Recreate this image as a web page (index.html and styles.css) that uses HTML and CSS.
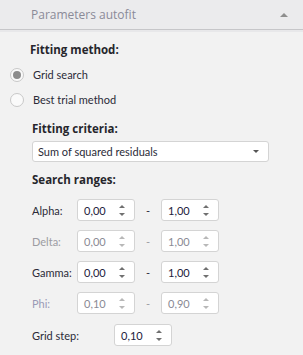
FILE: index.html
```html
<!DOCTYPE html>
<html lang="en">

<head>
    <meta charset="UTF-8">
    <link rel="stylesheet" href="styles.css">
    <title>Parameters autofit</title>
</head>

<body>
    <div class="panel">
        <div class="panel-head">
            <span class="panel-title">Parameters autofit</span>
            <span class="caret-up"></span>
        </div>

        <div class="panel-body">
            <div class="heading">Fitting method:</div>

            <label class="radio-row">
                <span class="radio checked"></span>
                <span>Grid search</span>
            </label>
            <label class="radio-row">
                <span class="radio"></span>
                <span>Best trial method</span>
            </label>

            <div class="sub">
                <div class="heading">Fitting criteria:</div>
                <div class="select">
                    <span>Sum of squared residuals</span>
                    <span class="caret-down"></span>
                </div>

                <div class="heading ranges">Search ranges:</div>

                <div class="range first">
                    <span class="range-label">Alpha:</span>
                    <div class="spin"><span>0,00</span><span class="arrows"><i class="up"></i><i class="down"></i></span></div>
                    <span class="dash">-</span>
                    <div class="spin"><span>1,00</span><span class="arrows"><i class="up"></i><i class="down"></i></span></div>
                </div>
                <div class="range disabled">
                    <span class="range-label">Delta:</span>
                    <div class="spin"><span>0,00</span><span class="arrows"><i class="up"></i><i class="down"></i></span></div>
                    <span class="dash">-</span>
                    <div class="spin"><span>1,00</span><span class="arrows"><i class="up"></i><i class="down"></i></span></div>
                </div>
                <div class="range">
                    <span class="range-label">Gamma:</span>
                    <div class="spin"><span>0,00</span><span class="arrows"><i class="up"></i><i class="down"></i></span></div>
                    <span class="dash">-</span>
                    <div class="spin"><span>1,00</span><span class="arrows"><i class="up"></i><i class="down"></i></span></div>
                </div>
                <div class="range disabled phi">
                    <span class="range-label">Phi:</span>
                    <div class="spin"><span>0,10</span><span class="arrows"><i class="up"></i><i class="down"></i></span></div>
                    <span class="dash">-</span>
                    <div class="spin"><span>0,90</span><span class="arrows"><i class="up"></i><i class="down"></i></span></div>
                </div>

                <div class="range step">
                    <span class="range-label">Grid step:</span>
                    <div class="spin"><span>0,10</span><span class="arrows"><i class="up"></i><i class="down"></i></span></div>
                </div>
            </div>
        </div>
    </div>
</body>

</html>
```

FILE: styles.css
```css
* {
    margin: 0;
    padding: 0;
    box-sizing: border-box;
}

body {
    background: #f2f2f2;
    font-family: Lato, "Open Sans", sans-serif;
    font-size: 11px;
    color: #2b2b38;
}

.panel {
    width: 303px;
    height: 355px;
    background: #f2f2f2;
}

.panel-head {
    height: 30px;
    display: flex;
    align-items: center;
    justify-content: space-between;
    padding: 0 15px 0 31px;
    background: #ebebed;
    border-bottom: 1px solid #c6c6c9;
    box-shadow: 0 2px 0 #e8e8ea;
}

.panel-title {
    font-family: "Open Sans", sans-serif;
    color: #8a8a98;
    font-size: 12px;
}

.caret-up {
    width: 0;
    height: 0;
    border-left: 4px solid transparent;
    border-right: 4px solid transparent;
    border-bottom: 4px solid #8e8e8e;
}

.panel-body {
    padding: 11px 0 0 10px;
}

.heading {
    font-family: "Open Sans", sans-serif;
    font-weight: bold;
    font-size: 11.5px;
    color: #26262c;
    padding-left: 20px;
    height: 18px;
    line-height: 18px;
}

.radio-row {
    display: flex;
    align-items: center;
    gap: 9px;
    height: 25px;
}

.radio-row:first-of-type {
    margin-top: 3px;
}

.radio {
    width: 14px;
    height: 14px;
    border-radius: 50%;
    border: 1px solid #c8c8c8;
    background: #fafafa;
    display: flex;
    align-items: center;
    justify-content: center;
}

.radio.checked::after {
    content: "";
    width: 8px;
    height: 8px;
    border-radius: 50%;
    background: #8c8c8c;
}

.sub {
    padding-left: 2px;
    margin-top: 8px;
}

.select {
    margin: 3px 0 0 20px;
    width: 237px;
    height: 21px;
    border: 1px solid #d4d4d4;
    border-radius: 3px;
    background: #fff;
    display: flex;
    align-items: center;
    justify-content: space-between;
    padding: 0 9px 0 5px;
}

.caret-down {
    width: 0;
    height: 0;
    border-left: 3px solid transparent;
    border-right: 3px solid transparent;
    border-top: 3px solid #555;
}

.ranges {
    margin-top: 9px;
}

.range {
    display: flex;
    align-items: center;
    padding-left: 20px;
    height: 22px;
    margin-top: 9px;
}

.range.first {
    margin-top: 10px;
}

.range-label {
    width: 45px;
}

.spin {
    width: 58px;
    height: 22px;
    border: 1px solid #d4d4d4;
    border-radius: 3px;
    background: #fff;
    color: #22223c;
    display: flex;
    align-items: center;
    justify-content: space-between;
    padding: 0 9px 0 6px;
}

.dash {
    width: 26px;
    text-align: center;
}

.arrows {
    display: flex;
    flex-direction: column;
    gap: 5px;
}

.arrows i {
    width: 0;
    height: 0;
    border-left: 3px solid transparent;
    border-right: 3px solid transparent;
}

.arrows .up {
    border-bottom: 3px solid #707070;
}

.arrows .down {
    border-top: 3px solid #707070;
}

.disabled {
    color: #9c9ca2;
}

.disabled.phi .range-label {
    color: #9a9ab6;
}

.disabled .spin {
    color: #8a8a94;
}

.disabled .arrows .up {
    border-bottom-color: #b8b8b8;
}

.disabled .arrows .down {
    border-top-color: #b8b8b8;
}

.step {
    margin-top: 10px;
}

.step .range-label {
    width: 82px;
}
```
